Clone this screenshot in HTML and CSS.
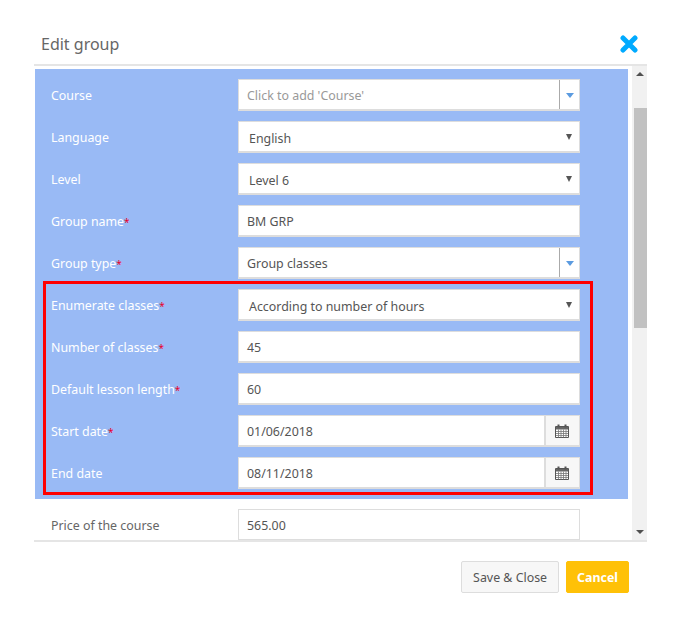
FILE: index.html
```html
<!DOCTYPE html>
<html lang="en">
<head>
    <meta charset="UTF-8">
    <meta name="viewport" content="width=device-width, initial-scale=1.0">
    <title>Edit group</title>
    <link rel="stylesheet" href="styles.css">
</head>
<body>
    <div class="modal">
        <div class="modal-head">
            <h2>Edit group</h2>
            <svg class="close" width="18" height="18" viewBox="0 0 18 18"><path d="M3 3L15 15M15 3L3 15" stroke="#00aaff" stroke-width="5" stroke-linecap="round"/></svg>
        </div>

        <div class="modal-body">
            <div class="form-area">
                <div class="panel">
                    <div class="row">
                        <div class="label">Course</div>
                        <div class="field combo">
                            <span class="value placeholder">Click to add 'Course'</span>
                            <span class="combo-btn"><i class="caret blue"></i></span>
                        </div>
                    </div>
                    <div class="row">
                        <div class="label">Language</div>
                        <div class="field select"><span class="value">English</span><i class="caret"></i></div>
                    </div>
                    <div class="row">
                        <div class="label">Level</div>
                        <div class="field select"><span class="value">Level 6</span><i class="caret"></i></div>
                    </div>
                    <div class="row">
                        <div class="label">Group name<span class="req">*</span></div>
                        <div class="field"><span class="value">BM GRP</span></div>
                    </div>
                    <div class="row">
                        <div class="label">Group type<span class="req">*</span></div>
                        <div class="field combo">
                            <span class="value">Group classes</span>
                            <span class="combo-btn"><i class="caret blue"></i></span>
                        </div>
                    </div>
                    <div class="row">
                        <div class="label">Enumerate classes<span class="req">*</span></div>
                        <div class="field select"><span class="value">According to number of hours</span><i class="caret"></i></div>
                    </div>
                    <div class="row">
                        <div class="label">Number of classes<span class="req">*</span></div>
                        <div class="field"><span class="value">45</span></div>
                    </div>
                    <div class="row">
                        <div class="label">Default lesson length<span class="req">*</span></div>
                        <div class="field"><span class="value">60</span></div>
                    </div>
                    <div class="row">
                        <div class="label">Start date<span class="req">*</span></div>
                        <div class="field date">
                            <span class="value">01/06/2018</span>
                            <span class="date-btn">
                                <svg width="14" height="14" viewBox="0 0 14 14"><path d="M.5 2.5h13v11H.5z" fill="#fff" stroke="#555"/><path d="M1 3h12v2.5H1z" fill="#666"/><path d="M1 7.5h12M1 9.5h12M1 11.5h12M3.5 5.5v8M6 5.5v8M8.5 5.5v8M11 5.5v8" stroke="#777" stroke-width=".8"/><path d="M3.5 .5v3M10.5 .5v3" stroke="#555" stroke-width="2"/></svg>
                            </span>
                        </div>
                    </div>
                    <div class="row">
                        <div class="label">End date</div>
                        <div class="field date">
                            <span class="value">08/11/2018</span>
                            <span class="date-btn">
                                <svg width="14" height="14" viewBox="0 0 14 14"><path d="M.5 2.5h13v11H.5z" fill="#fff" stroke="#555"/><path d="M1 3h12v2.5H1z" fill="#666"/><path d="M1 7.5h12M1 9.5h12M1 11.5h12M3.5 5.5v8M6 5.5v8M8.5 5.5v8M11 5.5v8" stroke="#777" stroke-width=".8"/><path d="M3.5 .5v3M10.5 .5v3" stroke="#555" stroke-width="2"/></svg>
                            </span>
                        </div>
                    </div>
                    <div class="highlight"></div>
                </div>
                <div class="row plain">
                    <div class="label">Price of the course</div>
                    <div class="field"><span class="value">565.00</span></div>
                </div>
            </div>

            <div class="scrollbar">
                <i class="arrow up"></i>
                <div class="track"><div class="thumb"></div></div>
                <i class="arrow down"></i>
            </div>
        </div>

        <div class="modal-foot">
            <button class="btn">Save &amp; Close</button>
            <button class="btn cancel">Cancel</button>
        </div>
    </div>
</body>
</html>
```

FILE: styles.css
```css
body {
    margin: 0;
    background: #fff;
    font-family: "Noto Sans", sans-serif;
    font-size: 12.4px;
    color: #555;
}
.modal {
    width: 613px;
    margin-left: 34px;
}

/* header */
.modal-head {
    height: 66px;
    display: flex;
    justify-content: space-between;
    align-items: center;
    padding: 24px 9px 0 7px;
    box-sizing: border-box;
    border-bottom: 2px solid #e5e5e5;
}
.modal-head h2 {
    margin: 0;
    font-size: 16px;
    font-weight: normal;
    color: #666;
}

/* body */
.modal-body {
    height: 474px;
    display: flex;
    border-bottom: 2px solid #e5e5e5;
}
.form-area {
    width: 598px;
    overflow: hidden;
}
.panel {
    position: relative;
    width: 577px;
    margin: 3px 0 10px 1px;
    padding: 10px 0 0 16px;
    background: #99baf5;
}
.row {
    display: flex;
    height: 32px;
    padding-bottom: 10px;
}
.row.plain {
    padding-left: 17px;
}
.label {
    width: 187px;
    height: 32px;
    line-height: 34px;
    color: #fff;
}
.row.plain .label {
    color: #666;
}
.req {
    color: #e8002a;
    font-size: 10px;
    line-height: 1;
}
.field {
    width: 342px;
    height: 32px;
    box-sizing: border-box;
    display: flex;
    align-items: center;
    justify-content: space-between;
    background: #fff;
    border: 1px solid #ddd;
    border-bottom-width: 2px;
    padding-left: 8px;
}
.value {
    padding-top: 2px;
}
.placeholder {
    color: #999;
}
.select {
    padding-left: 10px;
    padding-right: 7px;
}
.select .value {
    padding-top: 4px;
}
.select .caret {
    margin-top: 1px;
}
.combo {
    padding-right: 0;
}
.combo-btn {
    width: 20px;
    height: 100%;
    box-sizing: border-box;
    border-left: 1px solid #aaa;
    display: flex;
    align-items: center;
    justify-content: center;
}
.date {
    padding-right: 0;
}
.date-btn {
    width: 35px;
    height: 100%;
    box-sizing: border-box;
    padding-right: 1px;
    border-left: 2px solid #ddd;
    background: #f7f7f7;
    display: flex;
    align-items: center;
    justify-content: center;
}
.caret {
    width: 0;
    height: 0;
    border-left: 3.5px solid transparent;
    border-right: 3.5px solid transparent;
    border-top: 6px solid #555;
}
.caret.blue {
    border-left-width: 4px;
    border-right-width: 4px;
    border-top: 5px solid #5b9be0;
    margin-top: 2px;
}

/* red box someone drew around the fields */
.highlight {
    position: absolute;
    left: 8px;
    top: 212px;
    width: 544px;
    height: 208px;
    border: 3px solid #f00;
}

/* scrollbar */
.scrollbar {
    width: 15px;
    background: #f1f1f1;
    display: flex;
    flex-direction: column;
    align-items: center;
}
.track {
    flex: 1;
    width: 100%;
    padding-top: 26px;
    padding-bottom: 196px;
    box-sizing: border-box;
    display: flex;
    justify-content: flex-end;
}
.thumb {
    width: 13px;
    background: #c1c1c1;
}
.arrow {
    width: 0;
    height: 0;
    margin: 6px 0;
    border-left: 4px solid transparent;
    border-right: 4px solid transparent;
}
.arrow.up {
    border-bottom: 4px solid #505050;
}
.arrow.down {
    border-top: 4px solid #505050;
}

/* footer */
.modal-foot {
    display: flex;
    justify-content: flex-end;
    gap: 7px;
    padding: 19px 18px 0 0;
}
.btn {
    height: 32px;
    padding: 0 11px;
    font-family: "Noto Sans", sans-serif;
    font-size: 12.4px;
    color: #555;
    background: #f7f7f7;
    border: 1px solid #ddd;
    border-radius: 2px;
}
.cancel {
    padding: 0 10px;
    color: #fff;
    font-weight: bold;
    background: #ffc107;
    border-color: #ffc107;
}
```
